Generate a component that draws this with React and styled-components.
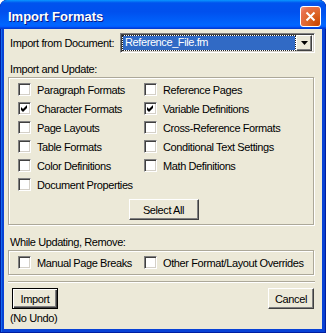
import React, { useState } from "react";
import styled, { createGlobalStyle } from "styled-components";

const GlobalStyle = createGlobalStyle`
  html, body {
    margin: 0;
    padding: 0;
    background: #fff;
  }
  body {
    font-family: "Liberation Sans", Arial, sans-serif;
  }
`;

const formats = [
  ["Paragraph Formats", false, "Reference Pages", false],
  ["Character Formats", true, "Variable Definitions", true],
  ["Page Layouts", false, "Cross-Reference Formats", false],
  ["Table Formats", false, "Conditional Text Settings", false],
  ["Color Definitions", false, "Math Definitions", false],
  ["Document Properties", false, null, false],
];

const CheckIcon = () => (
  <svg width="7" height="7" viewBox="0 0 7 7">
    <polygon points="0,2 2,4 6,0 6,3 2,7 0,5" fill="#000" />
  </svg>
);

const Check = ({ label, checked }) => {
  const [on, setOn] = useState(checked);
  return (
    <CheckRow onClick={() => setOn(!on)}>
      <Box>{on && <CheckIcon />}</Box>
      <span>{label}</span>
    </CheckRow>
  );
};

const App = () => {
  return (
    <>
      <GlobalStyle />
      <Window>
        <TitleBar>
          <Title>Import Formats</Title>
          <CloseButton>
            <svg width="11" height="11" viewBox="0 0 11 11">
              <path d="M1.5 1.5 L9.5 9.5 M9.5 1.5 L1.5 9.5" stroke="#fff" strokeWidth="2" />
            </svg>
          </CloseButton>
        </TitleBar>
        <Body>
          <DocRow>
            <Label>Import from Document:</Label>
            <Select>
              <Selected>Reference_File.fm</Selected>
              <ArrowButton>
                <svg width="7" height="4" viewBox="0 0 7 4">
                  <polygon points="0,0 7,0 3.5,4" fill="#000" />
                </svg>
              </ArrowButton>
            </Select>
          </DocRow>

          <SectionLabel $top={9}>Import and Update:</SectionLabel>
          <Group $height={148} $pad={2}>
            <CheckGrid>
              {formats.map(([a, ca, b, cb]) => (
                <React.Fragment key={a}>
                  <Check label={a} checked={ca} />
                  {b ? <Check label={b} checked={cb} /> : <span />}
                </React.Fragment>
              ))}
            </CheckGrid>
            <Centered>
              <Button $w={70}>Select All</Button>
            </Centered>
          </Group>

          <SectionLabel $top={10}>While Updating, Remove:</SectionLabel>
          <Group $height={25} $pad={5}>
            <RemoveRow>
              <Check label="Manual Page Breaks" checked={false} />
              <Check label="Other Format/Layout Overrides" checked={false} />
            </RemoveRow>
          </Group>

          <Separator />

          <Footer>
            <FooterCol>
              <Button $w={46} $default>Import</Button>
              <Note>(No Undo)</Note>
            </FooterCol>
            <Button $w={46}>Cancel</Button>
          </Footer>
        </Body>
      </Window>
    </>
  );
};

export default App;

const Window = styled.div`
  width: 326px;
  height: 333px;
  box-sizing: border-box;
  display: flex;
  flex-direction: column;
  border-radius: 7px 7px 0 0;
  background: #0842D6;
  box-shadow: inset 1px 0 0 #001EA0, inset -1px 0 0 #001EA0, inset 0 -1px 0 #001EA0,
    inset 2px 0 0 #166AEE, inset -2px 0 0 #0A3FCB;
  padding: 0 4px 4px 4px;
  overflow: hidden;
`;

const TitleBar = styled.div`
  height: 29px;
  margin: 0 -4px;
  padding: 0 5px 0 8px;
  display: flex;
  align-items: center;
  justify-content: space-between;
  border-radius: 7px 7px 0 0;
  background: linear-gradient(
    to bottom,
    #0997ff 0%,
    #0053ee 10%,
    #0050ee 40%,
    #0066ff 86%,
    #005bff 92%,
    #003dd7 97%,
    #003dd7 100%
  );
`;

const Title = styled.div`
  color: #fff;
  font-size: 13px;
  font-weight: bold;
  padding-top: 3px;
  text-shadow: 1px 1px 0 #0a1883;
`;

const CloseButton = styled.div`
  width: 21px;
  height: 21px;
  box-sizing: border-box;
  margin-top: 3px;
  border: 1px solid #fff;
  border-radius: 3px;
  background: radial-gradient(circle at 90% 90%, #cc4600 0%, #dc6527 45%, #e8704f 80%, #f19c82 100%);
  display: flex;
  align-items: center;
  justify-content: center;
`;

const Body = styled.div`
  flex: 1;
  background: #ece9d8;
  padding: 4px 4px 0 4px;
  font-size: 11px;
  letter-spacing: -0.4px;
  color: #000;
`;

const DocRow = styled.div`
  display: flex;
  align-items: center;
  height: 20px;
  padding-left: 2px;
`;

const Label = styled.span`
  width: 110px;
`;

const Select = styled.div`
  width: 195px;
  height: 20px;
  box-sizing: border-box;
  display: flex;
  align-items: center;
  background: #fff;
  border: 1px solid;
  border-color: #808080 #fff #fff #808080;
  box-shadow: inset 1px 1px 0 #404040, inset -1px -1px 0 #d4d0c8;
  padding: 2px;
`;

const Selected = styled.div`
  flex: 1;
  height: 14px;
  line-height: 13px;
  box-sizing: border-box;
  background: #316ac5;
  color: #fff;
  outline: 1px dotted #222;
  outline-offset: 0;
  padding-left: 2px;
  margin-right: 1px;
`;

const ArrowButton = styled.div`
  width: 16px;
  height: 16px;
  box-sizing: border-box;
  background: #ece9d8;
  border: 1px solid;
  border-color: #fff #404040 #404040 #fff;
  box-shadow: inset -1px -1px 0 #808080;
  display: flex;
  align-items: center;
  justify-content: center;
`;

const SectionLabel = styled.div`
  margin-top: ${(p) => p.$top}px;
  padding-left: 2px;
  height: 14px;
  line-height: 14px;
`;

const Group = styled.div`
  margin: 1px 4px 0 0;
  height: ${(p) => p.$height}px;
  box-sizing: border-box;
  border: 1px solid #aca899;
  box-shadow: inset 1px 1px 0 #fff, 1px 1px 0 #fff;
  padding: ${(p) => p.$pad}px 0 0 9px;
`;

const CheckGrid = styled.div`
  display: grid;
  grid-template-columns: 126px 1fr;
  grid-auto-rows: 19px;
`;

const CheckRow = styled.label`
  display: flex;
  align-items: center;
  gap: 6px;
  white-space: nowrap;
  cursor: default;
`;

const Box = styled.span`
  width: 13px;
  height: 13px;
  box-sizing: border-box;
  background: #fff;
  border: 1px solid;
  border-color: #808080 #fff #fff #808080;
  box-shadow: inset 1px 1px 0 #404040, inset -1px -1px 0 #d4d0c8;
  display: flex;
  align-items: center;
  justify-content: center;
  flex: none;
`;

const Centered = styled.div`
  display: flex;
  justify-content: center;
  margin-top: 5px;
  padding-right: 4px;
`;

const Button = styled.div`
  width: ${(p) => p.$w}px;
  height: 21px;
  box-sizing: border-box;
  display: flex;
  align-items: center;
  justify-content: center;
  background: #ece9d8;
  border: 1px solid;
  border-color: ${(p) => (p.$default ? "#000" : "#fff #404040 #404040 #fff")};
  box-shadow: ${(p) =>
    p.$default
      ? "inset 1px 1px 0 #fff, inset -1px -1px 0 #404040, inset -2px -2px 0 #808080"
      : "inset -1px -1px 0 #808080"};
`;

const RemoveRow = styled.div`
  display: grid;
  grid-template-columns: 126px 1fr;
  height: 13px;
`;

const Separator = styled.div`
  margin: 6px 3px 0 0;
  height: 1px;
  background: #aca899;
  border-bottom: 1px solid #fff;
`;

const Footer = styled.div`
  display: flex;
  justify-content: space-between;
  align-items: flex-start;
  margin-top: 5px;
  padding: 0 4px 0 4px;
`;

const FooterCol = styled.div`
  display: flex;
  flex-direction: column;
  align-items: flex-start;
`;

const Note = styled.div`
  margin-top: 2px;
  margin-left: -2px;
  line-height: 14px;
`;
